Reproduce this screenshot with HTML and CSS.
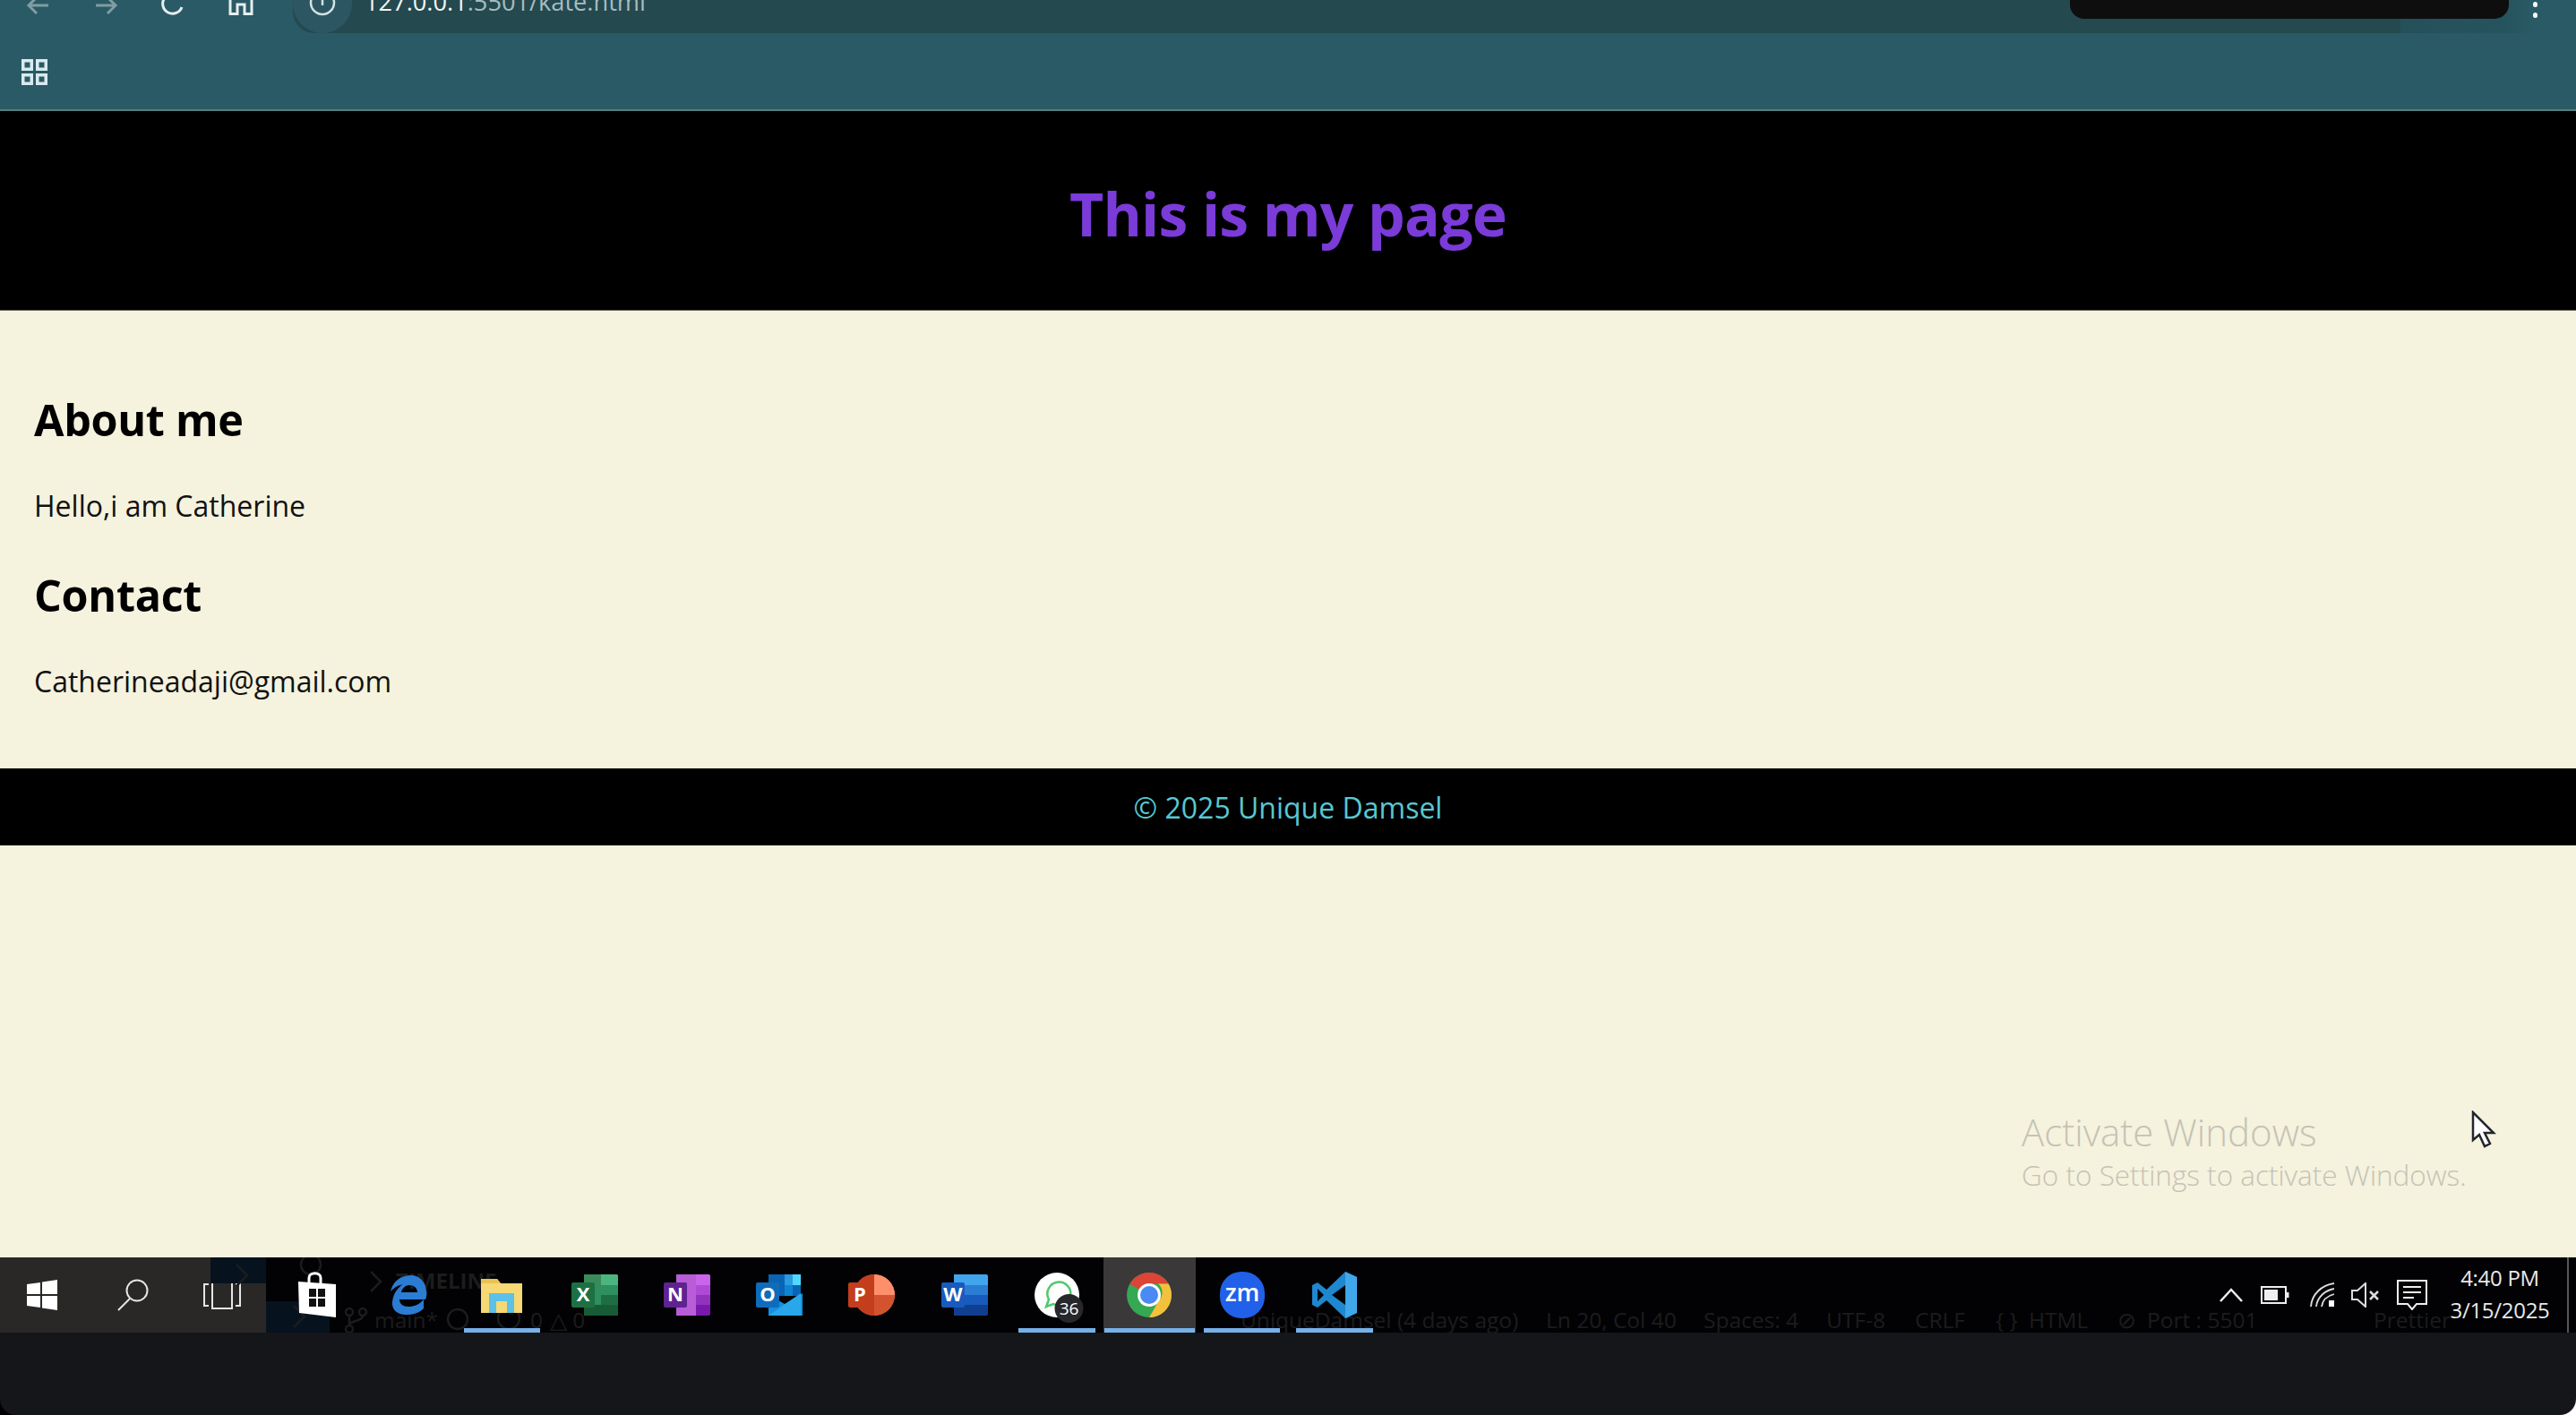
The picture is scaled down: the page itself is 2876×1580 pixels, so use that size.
FILE: index.html
```html
<!DOCTYPE html>
<html lang="en">
<head>
    <meta charset="UTF-8">
    <meta name="viewport" content="width=device-width, initial-scale=1.0">
    <title>Kate</title>
    <link rel="stylesheet" href="styles.css">
</head>
<body>
    <div class="browser-bar">
        <div class="toolbar">
            <div class="nav-btns">
                <svg class="nav-icon" width="26" height="20" viewBox="0 0 26 20" fill="none" stroke="#7f9da3" stroke-width="3"><path d="M24 6H3M11 -3L2 6l9 9"/></svg>
                <svg class="nav-icon" width="26" height="20" viewBox="0 0 26 20" fill="none" stroke="#7f9da3" stroke-width="3"><path d="M2 6h21M15 -3l9 9-9 9"/></svg>
                <svg class="nav-icon" width="26" height="20" viewBox="0 0 26 20" fill="none" stroke="#e4eef0" stroke-width="3"><path d="M23 8A11 11 0 1 1 20 -4"/></svg>
                <svg class="nav-icon" width="28" height="20" viewBox="0 0 28 20" fill="none" stroke="#e4eef0" stroke-width="3"><path d="M2 -4V15.500H10V5h8V15.500h8V-4"/></svg>
            </div>
            <div class="address">
                <span class="info-badge">
                    <svg width="30" height="19" viewBox="0 0 30 19" fill="none" stroke="#d3e2e4" stroke-width="2.500"><circle cx="15" cy="3" r="13"/><path d="M15 -3v9"/></svg>
                </span>
                <span class="url"><b>127.0.0.1</b>:5501/kate.html</span>
            </div>
            <div class="profile-zone"></div>
            <div class="menu-dots"><i></i><i></i></div>
        </div>
        <div class="bookmarks">
            <svg width="29" height="29" viewBox="0 0 29 29" fill="none" stroke="#d8eaee" stroke-width="3.500"><rect x="1.750" y="1.750" width="9.500" height="9.500"/><rect x="17.750" y="1.750" width="9.500" height="9.500"/><rect x="1.750" y="17.750" width="9.500" height="9.500"/><rect x="17.750" y="17.750" width="9.500" height="9.500"/></svg>
        </div>
        <div class="recorder-pill"></div>
    </div>

    <main class="page">
        <header class="page-head">
            <h1>This is my page</h1>
        </header>
        <section class="content">
            <h2>About me</h2>
            <p>Hello,i am Catherine</p>
            <h2>Contact</h2>
            <p>Catherineadaji@gmail.com</p>
        </section>
        <footer class="page-foot">&copy; 2025 Unique Damsel</footer>
        <div class="activate">
            <div class="activate-title">Activate Windows</div>
            <div class="activate-sub">Go to Settings to activate Windows.</div>
        </div>
        <svg class="cursor" width="28" height="42" viewBox="0 0 28 42"><path d="M2 2V33l7-6 6 13 6-3-6-12h10z" fill="#fff" stroke="#23262e" stroke-width="2.500"/></svg>
    </main>

    <div class="taskbar">
        <div class="task-left">
            <div class="sys-item sys-win">
                <svg width="36" height="36" viewBox="0 0 36 36" fill="#fff"><path d="M1 6l15-2v13H1zM18 3.500L35 1v16H18zM1 19h15v13L1 30zM18 19h17v16l-17-2.500z"/></svg>
            </div>
            <div class="sys-item">
                <svg width="38" height="36" viewBox="0 0 38 36" fill="none" stroke="#e6e6e6" stroke-width="2"><circle cx="23" cy="13" r="11.500"/><path d="M15 22L2 35"/></svg>
            </div>
            <div class="sys-item">
                <svg width="44" height="32" viewBox="0 0 44 32" fill="none" stroke="#e6e6e6" stroke-width="2"><rect x="11" y="1" width="22" height="30"/><path d="M7 4H2v24h5M37 4h5v24h-5"/></svg>
            </div>
        </div>

        <!-- vs code status bar showing through the see-through taskbar -->
        <div class="ghost-patch patch-a"></div>
        <div class="ghost-patch patch-b"></div>
        <div class="ghost-text">
            <svg class="ghost-icon" width="976" height="84" viewBox="0 0 976 84" fill="none" stroke="#1c1c1d" stroke-width="2.500">
                <path d="M264 8l12 12-12 12M328 54l12 12-12 12M414 16l11 11-11 11"/>
                <circle cx="347" cy="8" r="11"/>
                <circle cx="390" cy="61" r="4"/><circle cx="390" cy="80" r="4"/><circle cx="405" cy="61" r="4"/>
                <path d="M390 65v11M405 65c0 7-15 5-15 11"/>
                <circle cx="511" cy="69" r="11"/>
                <circle cx="568" cy="68" r="12"/>
            </svg>
            <span class="g-timeline">TIMELINE</span>
            <span class="g-main">main*</span>
            <span class="g-errors">0</span>
            <span class="g-warn">&#9651; 0</span>
            <span class="g-blame">UniqueDamsel (4 days ago)</span>
            <span class="g-ln">Ln 20, Col 40</span>
            <span class="g-spaces">Spaces: 4</span>
            <span class="g-utf">UTF-8</span>
            <span class="g-crlf">CRLF</span>
            <span class="g-brace">{ }</span>
            <span class="g-html">HTML</span>
            <span class="g-slash">&#8856;</span>
            <span class="g-port">Port : 5501</span>
            <span class="g-pretty">Prettier</span>
        </div>

        <div class="task-apps">
            <div class="app">
                <svg width="46" height="52" viewBox="0 0 46 52"><path d="M2 11l42 3v37L3 46z" fill="#fff"/><path d="M14 13V7c0-7 13-7 13 0v7" fill="none" stroke="#fff" stroke-width="3"/><path d="M14 19h8v9h-8zM24 19h8v9h-8zM14 30h8v9h-8zM24 30h8v9h-8z" fill="#111"/></svg>
            </div>
            <div class="app">
                <svg width="44" height="46" viewBox="0 0 44 46"><path d="M22 1c-12 1-19 9-21 18 5-5 9-7 14-8-6 4-11 10-12 20-1 9 7 15 17 14 8 0 14-3 18-7V28c-5 6-11 8-17 8-6 0-10-3-10-8h29c1-3 2-6 1-10C40 7 32 0 22 1zM13 20c1-5 5-8 9-8 5 0 9 3 9 8z" fill="#2b7cd3"/></svg>
            </div>
            <div class="app app-on">
                <svg width="48" height="40" viewBox="0 0 48 40"><path d="M1 2h18l4 5h24v33H1z" fill="#f6d874"/><path d="M1 2h18l4 5H1z" fill="#e9c253"/><path d="M10 40V18h28v22h-8V27H18v13z" fill="#5cc0e8"/></svg>
            </div>
            <div class="app">
                <svg width="52" height="46" viewBox="0 0 52 46"><path d="M14 0h36a2 2 0 0 1 2 2v42a2 2 0 0 1-2 2H14z" fill="#2f8f5f"/><path d="M33 0h17a2 2 0 0 1 2 2v10H33z" fill="#4cb57f"/><path d="M14 0h19v12H14z" fill="#3b8a5a"/><path d="M33 23h19v11H33z" fill="#1f6e43"/><path d="M14 34h38v10a2 2 0 0 1-2 2H14z" fill="#185c37"/><rect x="0" y="9" width="26" height="28" rx="2" fill="#1d7044"/><text x="13" y="30" class="icon-letter">X</text></svg>
            </div>
            <div class="app">
                <svg width="52" height="46" viewBox="0 0 52 46"><path d="M14 0h36a2 2 0 0 1 2 2v42a2 2 0 0 1-2 2H14z" fill="#7719aa"/><path d="M36 0h14a2 2 0 0 1 2 2v10H36z" fill="#ca64ea"/><path d="M36 12h16v11H36z" fill="#ae4bd5"/><path d="M36 23h16v11H36z" fill="#9332bf"/><path d="M14 0h22v46H14z" fill="#b85cd8"/><rect x="0" y="9" width="26" height="28" rx="2" fill="#5e2390"/><text x="13" y="30" class="icon-letter">N</text></svg>
            </div>
            <div class="app">
                <svg width="52" height="46" viewBox="0 0 52 46"><path d="M14 0h36v24H14z" fill="#0a64b4"/><path d="M32 0h9v12h-9z" fill="#2a9be0"/><path d="M41 0h9v12h-9z" fill="#50d9ff"/><path d="M32 12h9v12h-9z" fill="#0f84d4"/><path d="M14 23l18 10 20-12v25H14z" fill="#1490df"/><path d="M14 46l36-25v25z" fill="#28a8ea"/><rect x="0" y="9" width="26" height="28" rx="2" fill="#0f6cbd"/><text x="13" y="30" class="icon-letter">O</text></svg>
            </div>
            <div class="app">
                <svg width="52" height="46" viewBox="0 0 52 46"><circle cx="29" cy="23" r="23" fill="#ed6c47"/><path d="M29 0a23 23 0 0 1 23 23H29z" fill="#ff8f6b"/><path d="M29 23h23a23 23 0 0 1-23 23z" fill="#d35230"/><path d="M29 0v46a23 23 0 0 1 0-46z" fill="#c43e1c"/><rect x="0" y="9" width="26" height="28" rx="2" fill="#c43e1c"/><text x="13" y="30" class="icon-letter">P</text></svg>
            </div>
            <div class="app">
                <svg width="52" height="46" viewBox="0 0 52 46"><path d="M14 0h36a2 2 0 0 1 2 2v10H14z" fill="#41a5ee"/><path d="M14 12h38v11H14z" fill="#2b7cd3"/><path d="M14 23h38v11H14z" fill="#185abd"/><path d="M14 34h38v10a2 2 0 0 1-2 2H14z" fill="#103f91"/><rect x="0" y="9" width="26" height="28" rx="2" fill="#185abd"/><text x="13" y="30" class="icon-letter">W</text></svg>
            </div>
            <div class="app app-on">
                <svg class="wa-icon" width="50" height="50" viewBox="0 0 50 50"><circle cx="25" cy="25" r="25" fill="#fff"/><path d="M13 38l3-8a13 13 0 1 1 5 5z" fill="none" stroke="#4fc96b" stroke-width="2.500"/><circle cx="38.500" cy="40" r="16" fill="#26282c"/><text x="38.500" y="47" class="icon-count">36</text></svg>
            </div>
            <div class="app app-on app-active">
                <svg width="50" height="50" viewBox="0 0 50 50"><circle cx="25" cy="25" r="25" fill="#34a853"/><path d="M25 0a25 25 0 0 1 21.600 12.500H25a12.500 12.500 0 0 0-11 6.500L3.400 12.500A25 25 0 0 1 25 0z" fill="#db4437"/><path d="M46.600 12.500A25 25 0 0 1 25 50l11-19a12.500 12.500 0 0 0-1-18.500z" fill="#f4c13d"/><circle cx="25" cy="25" r="13" fill="#fff"/><circle cx="25" cy="25" r="10" fill="#4a8af4"/></svg>
            </div>
            <div class="app app-on">
                <svg width="50" height="52" viewBox="0 0 50 52"><rect x="0" y="0" width="50" height="52" rx="24" fill="#2160e8"/><text x="25" y="33" class="icon-zm">zm</text></svg>
            </div>
            <div class="app app-on">
                <svg width="50" height="52" viewBox="0 0 50 52"><path d="M37 0l13 6v40l-13 6-21-20-10 8-6-3V15l6-3 10 8z" fill="#1f87cf"/><path d="M37 0l13 6v40l-13 6z" fill="#3fa7ea"/><path d="M37 15L22 26l15 11z" fill="#000"/><path d="M6 19l7 7-7 7z" fill="#000"/></svg>
            </div>
        </div>
        <div class="tray">
            <svg width="26" height="16" viewBox="0 0 26 16" fill="none" stroke="#eee" stroke-width="2.500"><path d="M1 15L13 2l12 13"/></svg>
            <svg width="32" height="20" viewBox="0 0 32 20" fill="none" stroke="#eee" stroke-width="2"><rect x="1" y="1" width="27" height="18"/><rect x="4" y="4" width="15" height="12" fill="#eee" stroke="none"/><path d="M30 7v6" stroke-width="3"/></svg>
            <svg class="tray-wifi" width="28" height="28" viewBox="0 0 28 28" fill="none" stroke="#ddd" stroke-width="1.800"><path d="M1 27C2 13 13 3 27 1M7 27C8 17 16 9 27 7M13 27c1-7 6-12 14-14"/><rect x="21" y="20" width="6" height="7" fill="#fff" stroke="none"/></svg>
            <svg width="32" height="28" viewBox="0 0 32 28" fill="none" stroke="#ddd" stroke-width="2"><path d="M2 9h6l9-8v26l-9-8H2z"/><path d="M22 10l9 9M31 10l-9 9" stroke-width="2.500"/></svg>
            <svg width="34" height="34" viewBox="0 0 34 34" fill="none" stroke="#eee" stroke-width="2"><path d="M1 1h32v26H22l-5 6-5-6H1z"/><path d="M7 8h20M7 14h20M7 20h12"/></svg>
            <div class="clock">
                <div>4:40 PM</div>
                <div>3/15/2025</div>
            </div>
            <div class="show-desktop"></div>
        </div>
    </div>
    <div class="bottom-edge"></div>
</body>
</html>
```

FILE: styles.css
```css
* {
    box-sizing: border-box;
}
html, body {
    margin: 0;
    height: 100%;
    overflow: hidden;
}
body {
    display: flex;
    flex-direction: column;
    font-family: "Open Sans", "Noto Sans", sans-serif;
    background: linear-gradient(90deg, #000 50%, #fff 50%);
}

/* browser chrome, top of it is cut off by the recording */
.browser-bar {
    position: relative;
    flex: none;
    height: 124px;
    background: #2a5a65;
    border-bottom: 2px solid #587c7c;
}
.toolbar {
    display: flex;
    height: 37px;
    align-items: flex-end;
}
.nav-btns {
    display: flex;
    width: 327px;
    height: 37px;
    padding: 0 0 20px 30px;
    gap: 49px;
}
.nav-icon {
    overflow: visible;
}
.address {
    display: flex;
    align-items: flex-end;
    width: 2353px;
    height: 37px;
    background: #24494f;
    border-bottom-left-radius: 24px;
}
.info-badge {
    display: flex;
    justify-content: center;
    width: 66px;
    height: 37px;
    background: #2c5762;
    border-radius: 0 0 33px 33px;
}
.url {
    margin: 0 0 22px 14px;
    font-size: 27.200px;
    line-height: 26px;
    color: #a7bcbe;
    white-space: nowrap;
}
.url b {
    font-weight: 400;
    color: #f0f6f6;
}
.profile-zone {
    width: 148px;
    height: 37px;
    background: linear-gradient(90deg, #24505a, #26545e 80%, #2a5a65);
}
.menu-dots {
    display: flex;
    flex-direction: column;
    gap: 6px;
    padding-bottom: 17px;
}
.menu-dots i {
    display: block;
    width: 5px;
    height: 6px;
    background: #f0f8f8;
    border-radius: 3px;
}
.bookmarks {
    position: relative;
    padding: 29px 0 0 24px;
    line-height: 0;
}
.recorder-pill {
    position: absolute;
    top: 0;
    left: 2311px;
    width: 490px;
    height: 21px;
    background: #0e0e0e;
    border-radius: 0 0 16px 16px;
}

/* the page itself */
.page {
    position: relative;
    flex: none;
    height: 1280px;
    background: #f5f2de;
}
.page-head {
    height: 223px;
    background: #000;
    padding-top: 71px;
    border-bottom: 1px solid #6a675c;
}
h1 {
    margin: 0;
    text-align: center;
    font-size: 66px;
    line-height: 87px;
    font-weight: 700;
    color: #7a3bd8;
    letter-spacing: -0.750px;
}
.content {
    height: 511px;
    padding: 0 38px;
    color: #000;
}
h2 {
    margin: 0;
    padding-top: 89px;
    font-size: 48.500px;
    line-height: 64px;
    font-weight: 700;
    letter-spacing: -0.300px;
}
.content h2 ~ h2 {
    padding-top: 45px;
}
.content p {
    margin: 0;
    padding-top: 43px;
    font-size: 32px;
    line-height: 44px;
    color: #111;
}
.page-foot {
    height: 86px;
    background: #000;
    text-align: center;
    font-size: 32px;
    line-height: 88px;
    color: #58c8d0;
}
.activate {
    position: absolute;
    left: 2257px;
    top: 1112px;
    color: #c4c3b4;
    white-space: nowrap;
}
.activate-title {
    font-size: 42px;
    line-height: 56px;
    font-weight: 300;
}
.activate-sub {
    font-size: 31.500px;
    line-height: 40px;
    font-weight: 300;
}
.cursor {
    position: absolute;
    left: 2759px;
    top: 1116px;
}

/* windows taskbar */
.taskbar {
    position: relative;
    flex: none;
    display: flex;
    height: 84px;
    background: #020204;
}
.ghost-patch {
    position: absolute;
    background: #06131f;
}
.patch-a {
    left: 235px;
    top: 0;
    width: 62px;
    height: 29px;
}
.patch-b {
    left: 297px;
    top: 49px;
    width: 71px;
    height: 35px;
}
.ghost-text {
    position: absolute;
    inset: 0;
    overflow: hidden;
    color: #1c1c1d;
    font-size: 24.500px;
    line-height: 28px;
    white-space: nowrap;
}
.ghost-icon {
    position: absolute;
    left: 0;
    top: 0;
}
.ghost-text span {
    position: absolute;
    top: 56px;
}
.ghost-text .g-timeline {
    left: 442px;
    top: 12px;
    font-weight: 700;
    font-size: 24px;
}
.g-main { left: 418px; }
.g-errors { left: 592px; }
.g-warn { left: 614px; }
.g-blame { left: 1385px; }
.g-ln { left: 1726px; }
.g-spaces { left: 1902px; }
.g-utf { left: 2039px; }
.g-crlf { left: 2138px; }
.g-brace { left: 2228px; }
.g-html { left: 2265px; }
.g-slash { left: 2364px; }
.g-port { left: 2397px; }
.g-pretty { left: 2650px; }
.task-left {
    display: flex;
    width: 297px;
    background: #2a2826;
    flex: none;
}
.sys-item {
    display: flex;
    width: 99px;
    align-items: center;
    justify-content: center;
}
.sys-win {
    padding-right: 5px;
}
.task-apps {
    display: flex;
    padding-left: 5px;
    flex: none;
}
.app {
    position: relative;
    display: flex;
    width: 103.300px;
    align-items: center;
    justify-content: center;
}
.app-on::after {
    content: "";
    position: absolute;
    left: 9px;
    right: 9px;
    bottom: 0;
    height: 5px;
    background: #76b1e8;
}
.app-active {
    background: #3a3838;
}
.app-active::after {
    left: 1px;
    right: 1px;
}
.wa-icon {
    overflow: visible;
}
.icon-letter {
    font-family: "Open Sans", sans-serif;
    font-size: 22px;
    font-weight: 700;
    fill: #fff;
    text-anchor: middle;
}
.icon-count {
    font-family: "Open Sans", sans-serif;
    font-size: 19px;
    fill: #fff;
    text-anchor: middle;
}
.icon-zm {
    font-family: "Open Sans", sans-serif;
    font-size: 27px;
    font-weight: 600;
    fill: #fff;
    text-anchor: middle;
}
.tray {
    position: relative;
    display: flex;
    flex: 1;
    align-items: center;
    justify-content: flex-end;
    padding-right: 8px;
    gap: 20px;
}
.tray-wifi {
    margin: 0 -3px 0 3px;
}
.clock {
    margin-left: 3px;
    width: 116px;
    margin-top: -3px;
    text-align: center;
    font-size: 24px;
    line-height: 36px;
    letter-spacing: -0.300px;
    color: #e8e8e8;
    white-space: nowrap;
}
.show-desktop {
    align-self: stretch;
    width: 2px;
    margin-left: -3px;
    background: #55565a;
}
.bottom-edge {
    flex: 1;
    background: #14161a;
    border-radius: 0 0 18px 18px;
}
```
